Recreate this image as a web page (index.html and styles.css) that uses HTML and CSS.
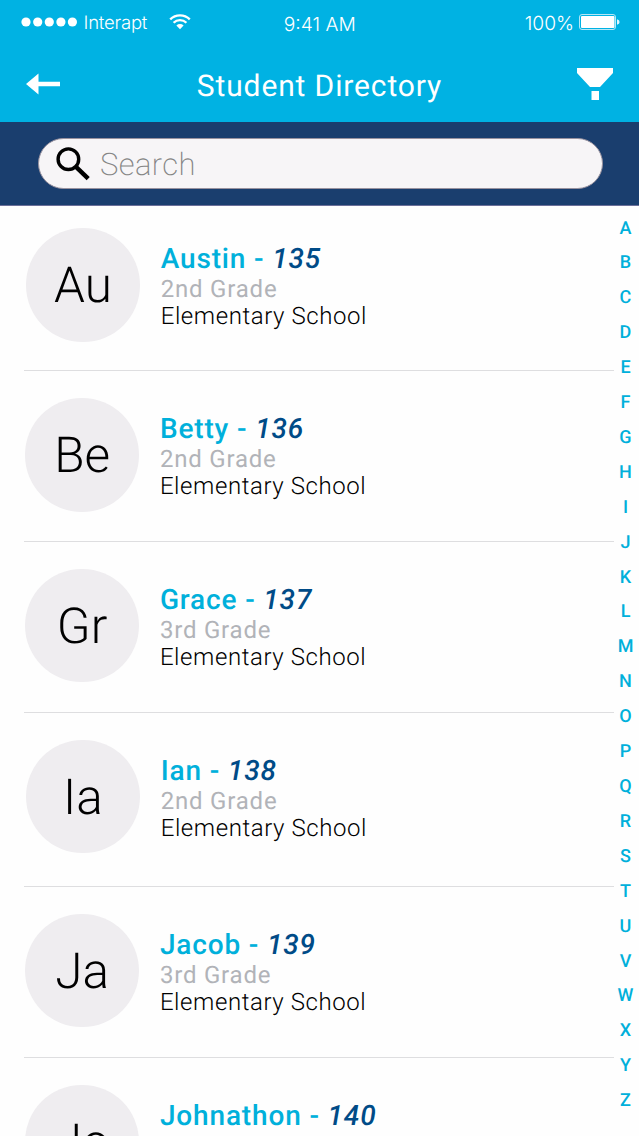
FILE: index.html
```html
<!DOCTYPE html>
<html lang="en">
<head>
<meta charset="utf-8">
<title>Student Directory</title>
<link rel="stylesheet" href="styles.css">
</head>
<body>
<div class="app">
<header class="header">
  <div class="status">
    <div class="status-left">
      <svg class="signal" width="56" height="10" viewBox="0 0 56 10" fill="#fff"><circle cx="5" cy="5" r="4.6"/><circle cx="16.7" cy="5" r="4.6"/><circle cx="28.3" cy="5" r="4.6"/><circle cx="39.9" cy="5" r="4.6"/><circle cx="51.4" cy="5" r="4.6"/></svg>
      <span class="carrier">Interapt</span>
      <svg class="wifi" width="22" height="16" viewBox="0 0 22 16"><g fill="none" stroke="#fff" stroke-width="2.3"><path d="M1.2 5.4a13.8 13.8 0 0 1 19.6 0"/><path d="M4.6 8.8a9 9 0 0 1 12.8 0"/></g><path d="M7.4 11.5a5.1 5.1 0 0 1 7.2 0L11 15.2z" fill="#fff"/></svg>
    </div>
    <span class="clock">9:41 AM</span>
    <div class="status-right">
      <span class="percent">100%</span>
      <svg class="battery" width="41" height="16" viewBox="0 0 41 16"><rect x=".5" y=".5" width="36" height="15" rx="2.5" fill="none" stroke="#b5e7f7"/><rect x="2" y="2" width="33.5" height="12" rx="1" fill="#fff"/><path d="M38 5.2q2.6.6 2.6 2.8t-2.6 2.8z" fill="#e0f6fd"/></svg>
    </div>
  </div>
  <div class="nav">
    <svg class="back" width="34" height="22" viewBox="0 0 34 22" fill="#fff"><path d="M0 11 12.5.5v8.2H34v4.6H12.5v8.2z"/></svg>
    <h1 class="title">Student Directory</h1>
    <svg class="filter" width="36" height="32" viewBox="0 0 36 32" fill="#fff"><path d="M0 0h36v5L23 19H13L0 5zM14.5 23h7.5v9h-7.5z"/></svg>
  </div>
</header>
<div class="searchbar">
  <div class="search">
    <svg class="search-icon" width="36" height="36" viewBox="0 0 36 36" fill="none" stroke="#000"><circle cx="13.4" cy="13.2" r="10.3" stroke-width="3.4"/><path d="m21 20.8 12.2 11.8" stroke-width="4.4"/></svg>
    <span class="placeholder">Search</span>
  </div>
</div>
<main class="content">
  <ul class="students">
    <li class="student inset"><div class="avatar">Au</div><div class="info"><div class="name">Austin - <em>135</em></div><div class="grade">2nd Grade</div><div class="school">Elementary School</div></div></li>
    <li class="student"><div class="avatar">Be</div><div class="info"><div class="name">Betty - <em>136</em></div><div class="grade">2nd Grade</div><div class="school">Elementary School</div></div></li>
    <li class="student"><div class="avatar">Gr</div><div class="info"><div class="name">Grace - <em>137</em></div><div class="grade">3rd Grade</div><div class="school">Elementary School</div></div></li>
    <li class="student inset tall"><div class="avatar">Ia</div><div class="info"><div class="name">Ian - <em>138</em></div><div class="grade">2nd Grade</div><div class="school">Elementary School</div></div></li>
    <li class="student"><div class="avatar">Ja</div><div class="info"><div class="name">Jacob - <em>139</em></div><div class="grade">3rd Grade</div><div class="school">Elementary School</div></div></li>
    <li class="student"><div class="avatar">Jo</div><div class="info"><div class="name">Johnathon - <em>140</em></div><div class="grade">2nd Grade</div><div class="school">Elementary School</div></div></li>
  </ul>
  <nav class="index"><span>A</span><span>B</span><span>C</span><span>D</span><span>E</span><span>F</span><span>G</span><span>H</span><span>I</span><span>J</span><span>K</span><span>L</span><span>M</span><span>N</span><span>O</span><span>P</span><span>Q</span><span>R</span><span>S</span><span>T</span><span>U</span><span>V</span><span>W</span><span>X</span><span>Y</span><span>Z</span></nav>
</main>
</div>
</body>
</html>
```
FILE: styles.css
```css
* { box-sizing: border-box; }
body { margin: 0; background: #fefefe; font-family: Roboto, sans-serif; text-rendering: geometricPrecision; }
svg { display: block; flex: none; }
.app { width: 639px; height: 1136px; overflow: hidden; display: flex; flex-direction: column; }
.header { height: 122px; flex: none; background: #00b2e3; color: #fff; }
.status { height: 44px; display: grid; grid-template-columns: 1fr auto 1fr; align-items: center; padding: 0 19px 0 21px; font: 400 18.5px/22px Inter, sans-serif; }
.status-left, .status-right { display: flex; align-items: center; }
.status-right { justify-content: flex-end; gap: 5px; }
.carrier { margin-left: 6.5px; padding-top: 1px; letter-spacing: -.2px; font-weight: 300; }
.wifi { margin-left: 22px; }
.clock { padding: 3px 1.5px 0 0; font-size: 19.2px; font-weight: 300; }
.percent { font-size: 19.2px; padding-top: 1px; font-weight: 300; }
.nav { height: 78px; display: grid; grid-template-columns: 60px 1fr 60px; align-items: center; padding: 0 26px; }
.title { margin: 7px 0 0; text-align: center; font-size: 30px; line-height: 36px; font-weight: 400; letter-spacing: .87px; }
.back { margin-top: 2px; }
.filter { justify-self: end; margin-top: 2px; }
.searchbar { height: 84px; flex: none; background: #1a3e6e; padding: 16px 36px 0 38px; border-bottom: 1px solid #6b6f99; }
.search { height: 51px; display: flex; align-items: center; padding-left: 16px; border-radius: 26px; background: #f7f5f7; border: 1px solid #99929f; }
.placeholder { margin-left: 9px; padding-top: 1px; font-size: 31px; font-weight: 200; color: #858585; letter-spacing: .4px; }
.content { flex: 1; min-height: 0; display: flex; }
.students { list-style: none; margin: 0; padding: 0 0 0 24px; width: 614px; }
.student { height: 170.8px; display: flex; padding: 27px 0 0 1.4px; border-bottom: 1px solid #dedee0; }
.student.inset { padding-left: 2.2px; }
.student:first-child { height: 165.2px; padding-top: 22px; }
.student.tall { height: 174px; }
.avatar { width: 113.5px; height: 113.5px; flex: none; border-radius: 50%; background: #efedf0; color: #000; text-align: center; font-size: 49.5px; line-height: 117px; font-weight: 300; }
.info { margin: 14px 0 0 21px; white-space: nowrap; }
.name { font-size: 28px; line-height: 33px; font-weight: 500; color: #00b0db; letter-spacing: .85px; }
.name em { color: #004b87; }
.grade { font-size: 24px; line-height: 28px; color: #b1b3b8; letter-spacing: .8px; }
.school { font-size: 24px; line-height: 27px; font-weight: 300; color: #000; letter-spacing: .57px; }
.index { width: 25px; padding: 5.5px 2px 0 0; display: flex; flex-direction: column; align-items: center; font-size: 18px; font-weight: 500; color: #00b0db; }
.index span { height: 34.92px; line-height: 34.92px; flex: none; }
```
